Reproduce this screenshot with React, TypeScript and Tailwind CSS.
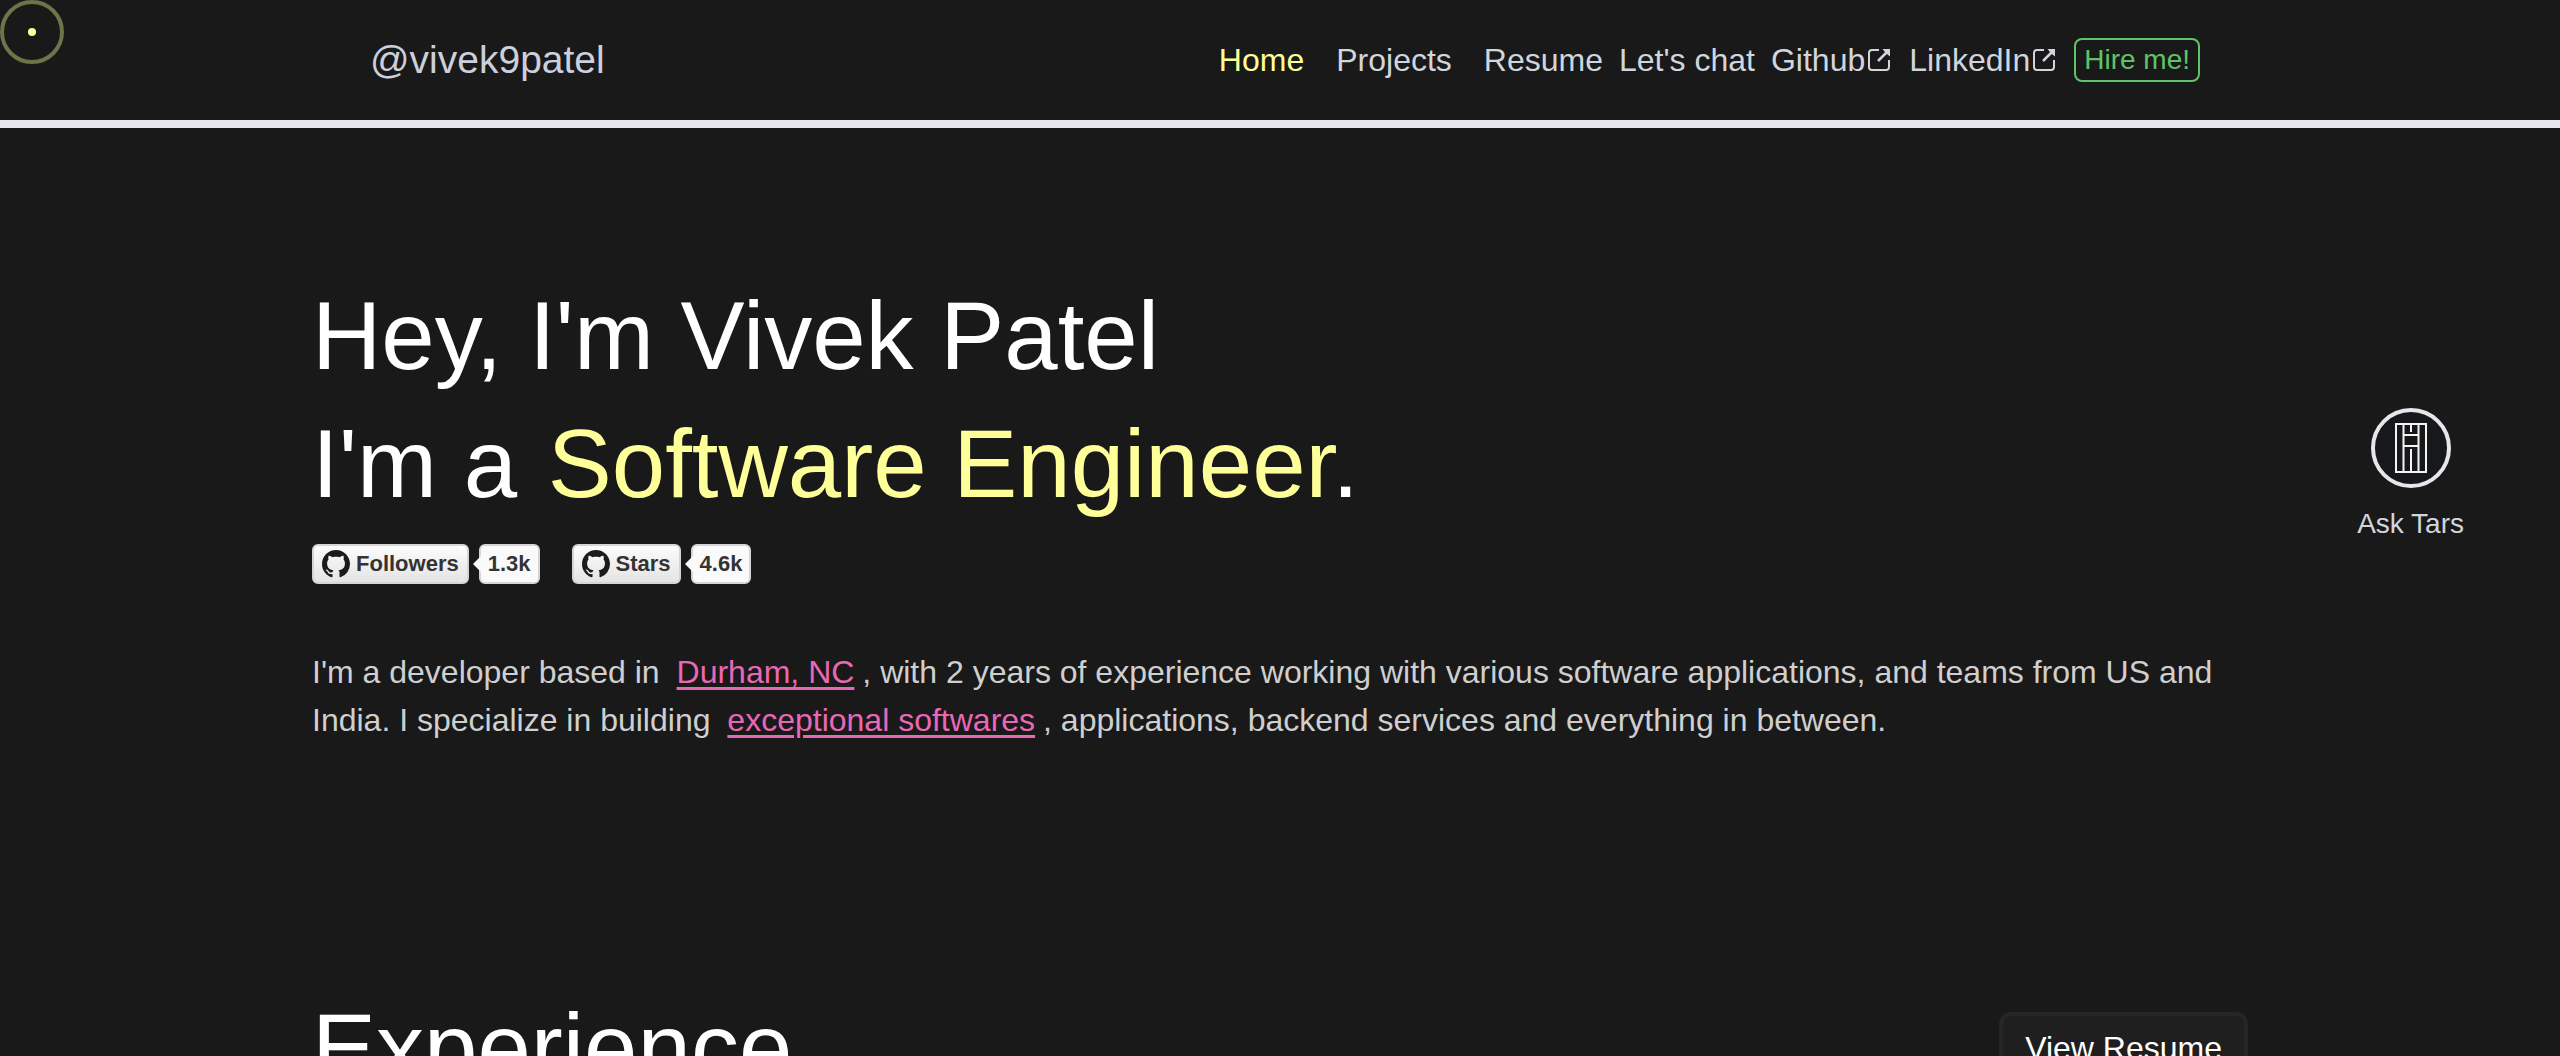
import React from "react";

const OCTOCAT =
  "M8 0C3.58 0 0 3.58 0 8c0 3.54 2.29 6.53 5.47 7.59.4.07.55-.17.55-.38 0-.19-.01-.82-.01-1.49-2.01.37-2.53-.49-2.69-.94-.09-.23-.48-.94-.82-1.13-.28-.15-.68-.52-.01-.53.63-.01 1.08.58 1.23.82.72 1.21 1.87.87 2.33.66.07-.52.28-.87.51-1.07-1.78-.2-3.64-.89-3.64-3.95 0-.87.31-1.59.82-2.15-.08-.2-.36-1.02.08-2.12 0 0 .67-.21 2.2.82.64-.18 1.32-.27 2-.27s1.36.09 2 .27c1.53-1.04 2.2-.82 2.2-.82.44 1.1.16 1.92.08 2.12.51.56.82 1.27.82 2.15 0 3.07-1.87 3.75-3.65 3.95.29.25.54.73.54 1.48 0 1.07-.01 1.93-.01 2.2 0 .21.15.46.55.38A8.01 8.01 0 0 0 16 8c0-4.42-3.58-8-8-8z";

function ExternalIcon() {
  return (
    <svg viewBox="0 0 28 28" className="size-7" fill="none" stroke="currentColor" strokeWidth="2" aria-hidden="true">
      <path d="M14 4H7a3 3 0 0 0-3 3v14a3 3 0 0 0 3 3h14a3 3 0 0 0 3-3v-7" />
      <path d="M13 15L22 6" strokeWidth="2.500" />
      <path d="M17.500 3H25v7.500L22.500 8.500 19.500 5.500z" fill="currentColor" stroke="none" />
    </svg>
  );
}

function Badge({ label, count }: { label: string; count: string }) {
  return (
    <div className="flex items-center gap-2.5 text-[22px] leading-9 font-bold text-[#333]">
      <a
        href="#github"
        className="flex items-center gap-1.5 rounded-md border-2 border-[#d5d5d5] bg-linear-to-b from-[#fcfcfc] to-[#e4e4e4] px-2"
      >
        <svg viewBox="0 0 16 16" className="size-7 fill-[#1b1b1b]" aria-hidden="true">
          <path d={OCTOCAT} />
        </svg>
        {label}
      </a>
      <a href="#count" className="relative rounded-md border-2 border-[#d5d5d5] bg-[#fafafa] px-[7px]">
        <svg viewBox="0 0 8 16" className="absolute top-2.5 -left-2 h-4 w-2 fill-[#fafafa]" aria-hidden="true">
          <path d="M8 0L0 8l8 8z" />
        </svg>
        {count}
      </a>
    </div>
  );
}

function TextLink({ children }: { children: React.ReactNode }) {
  return (
    <a href="#more" className="mx-2 text-[#e868b5] underline decoration-[3px] underline-offset-4">
      {children}
    </a>
  );
}

export default function App() {
  return (
    <div className="relative h-screen overflow-hidden bg-[#191919] font-['Liberation_Sans',Arial,sans-serif] text-white">
      <header className="border-b-8 border-gray-200 text-gray-300">
        <div className="mx-auto flex h-30 max-w-[1936px] items-center justify-between px-12">
          <a href="#top" className="px-2.5 text-[39px] leading-14 text-[#cbd0dc]">
            @vivek9patel
          </a>
          <nav className="flex items-center gap-4 text-[32px] leading-12">
            <a href="#home" className="mr-4 text-[#ffff99]">Home</a>
            <a href="#projects" className="mr-4">Projects</a>
            <a href="#resume">Resume</a>
            <a href="#chat">Let's chat</a>
            <a href="#github" className="flex items-center">Github<ExternalIcon /></a>
            <a href="#linkedin" className="flex items-center">LinkedIn<ExternalIcon /></a>
            <a href="#hire" className="rounded-lg border-2 border-[#5fc468] px-2 text-[28px] leading-10 text-[#5fc468]">
              Hire me!
            </a>
          </nav>
        </div>
      </header>

      <main className="mx-auto max-w-[1936px]">
        <section className="pt-36">
          <h1 className="text-[96px] leading-32">
            Hey, I'm Vivek Patel
            <br />
            I'm a <span className="ml-1 text-[#ffff99]">Software Engineer</span>.
          </h1>
          <div className="mt-4 flex gap-8">
            <Badge label="Followers" count="1.3k" />
            <Badge label="Stars" count="4.6k" />
          </div>
          <p className="mt-16 text-[32px] leading-12 text-[#cfcfcf]">
            I'm a developer based in <TextLink>Durham, NC</TextLink>, with 2 years of experience working with various
            software applications, and teams from US and India. I specialize in building{" "}
            <TextLink>exceptional softwares</TextLink>, applications, backend services and everything in between.
          </p>
        </section>

        <section className="mt-60 flex items-center justify-between">
          <h2 className="text-[96px] leading-32">Experience</h2>
          <button type="button" className="rounded-xl border-4 border-[#262626] bg-[#1f1f1f] px-[22px] py-2 text-[32px] leading-12">
            View Resume
          </button>
        </section>
      </main>

      <button type="button" className="absolute top-[408px] right-24 flex flex-col items-center gap-3 text-[28px] leading-12 text-gray-300">
        <span className="flex size-20 items-center justify-center rounded-full border-4 border-gray-200 bg-[#17181c]">
          <svg viewBox="0 0 32 50" className="h-[50px] w-8" fill="none" stroke="#f5f5f0" strokeWidth="2" aria-hidden="true">
            <path d="M1 1h30v48H1zM8.500 1v48M23.500 1v48M8.500 12h15M8.500 23h15M16 1v8M16 26v23" />
          </svg>
        </span>
        Ask Tars
      </button>

      <div className="pointer-events-none absolute top-0 left-0 flex size-16 items-center justify-center rounded-full border-4 border-[#70724a]">
        <span className="size-2 rounded-full bg-[#ffff99]" />
      </div>
    </div>
  );
}
